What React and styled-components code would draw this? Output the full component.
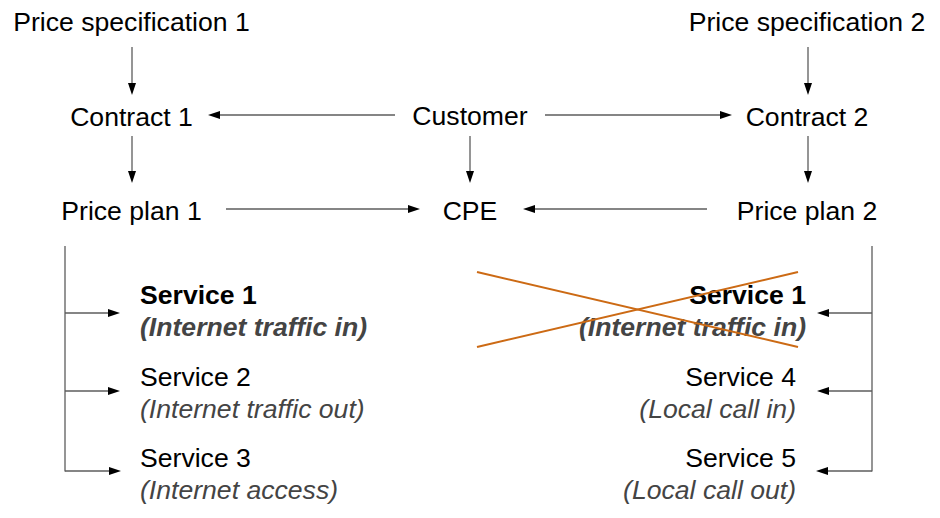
import React from 'react';
import styled, { createGlobalStyle } from 'styled-components';

const GlobalStyle = createGlobalStyle`
    html, body {
        margin: 0;
        padding: 0;
        background: #ffffff;
    }
    body {
        font-family: "Liberation Sans", Arial, sans-serif;
    }
`;

const Canvas = styled.div`
    position: relative;
    box-sizing: border-box;
    width: 940px;
    height: 518px;
    padding-top: 7px;
    overflow: hidden;
    background: #ffffff;
    font-family: "Liberation Sans", Arial, sans-serif;
    font-size: 26.6px;
`;

const Wires = styled.svg`
    position: absolute;
    left: 0;
    top: 0;
    width: 940px;
    height: 518px;
    pointer-events: none;
`;

// three columns of nodes: left contract, customer, right contract
const NodeGrid = styled.div`
    display: grid;
    grid-template-columns: 263px 414px 260px;
    grid-template-rows: 95px 94px 30px;
    justify-items: center;
    align-items: start;
`;

const Node = styled.div`
    grid-column: ${(p) => p.col};
    grid-row: ${(p) => p.row};
    margin-top: ${(p) => p.nudge || 0}px;
    line-height: 30px;
    color: #000000;
    white-space: nowrap;
`;

const ServiceRow = styled.div`
    display: flex;
    justify-content: space-between;
    margin-top: 53px;
    padding: 0 134px 0 140px;
`;

const ServiceList = styled.div`
    display: flex;
    flex-direction: column;
    align-items: ${(p) => (p.side === 'right' ? 'flex-end' : 'flex-start')};
    gap: 17.5px;
`;

const Service = styled.div`
    display: flex;
    flex-direction: column;
    align-items: inherit;
    text-align: ${(p) => (p.side === 'right' ? 'right' : 'left')};
    margin-right: ${(p) => p.shift || 0}px;
    line-height: 32px;
    white-space: nowrap;
`;

const Name = styled.span`
    color: #000000;
    font-weight: ${(p) => (p.strong ? 700 : 400)};
`;

const Note = styled.span`
    color: #444444;
    font-style: italic;
    font-weight: ${(p) => (p.strong ? 700 : 400)};
`;

const arrows = [
    [132, 47, 132, 95],
    [132, 136, 132, 183],
    [395, 115, 208, 115],
    [470, 136, 470, 183],
    [226, 209, 420, 209],
    [545, 115, 732, 115],
    [808, 47, 808, 95],
    [808, 136, 808, 183],
    [707, 209, 523, 209],
    [65, 313, 120, 313],
    [65, 391, 120, 391],
    [65, 471, 121, 471],
    [872, 313, 817, 313],
    [872, 391, 817, 391],
    [872, 471, 816, 471],
];

const Arrow = ({ from, to }) => {
    const [x1, y1] = from;
    const [x2, y2] = to;
    const len = Math.hypot(x2 - x1, y2 - y1);
    const ux = (x2 - x1) / len;
    const uy = (y2 - y1) / len;
    const head = 12;
    const half = 4;
    const bx = x2 - ux * head;
    const by = y2 - uy * head;
    const pts = `${x2},${y2} ${bx - uy * half},${by + ux * half} ${bx + uy * half},${by - ux * half}`;
    return (
        <g>
            <line x1={x1} y1={y1} x2={bx} y2={by} stroke="#5c5c5c" strokeWidth="1.3" />
            <polygon points={pts} fill="#000000" />
        </g>
    );
};

const nodes = [
    { text: 'Price specification 1', col: 1, row: 1 },
    { text: 'Price specification 2', col: 3, row: 1 },
    { text: 'Contract 1', col: 1, row: 2 },
    { text: 'Customer', col: 2, row: 2, nudge: -1 },
    { text: 'Contract 2', col: 3, row: 2 },
    { text: 'Price plan 1', col: 1, row: 3 },
    { text: 'CPE', col: 2, row: 3 },
    { text: 'Price plan 2', col: 3, row: 3 },
];

const leftServices = [
    { name: 'Service 1', note: '(Internet traffic in)', strong: true },
    { name: 'Service 2', note: '(Internet traffic out)' },
    { name: 'Service 3', note: '(Internet access)' },
];

const rightServices = [
    { name: 'Service 1', note: '(Internet traffic in)', strong: true, shift: 0 },
    { name: 'Service 4', note: '(Local call in)', shift: 10 },
    { name: 'Service 5', note: '(Local call out)', shift: 10 },
];

class App extends React.Component {
    render() {
        return (
            <Canvas>
                <GlobalStyle />

                <NodeGrid>
                    {nodes.map((n) => (
                        <Node key={n.text} col={n.col} row={n.row} nudge={n.nudge}>
                            {n.text}
                        </Node>
                    ))}
                </NodeGrid>

                <ServiceRow>
                    <ServiceList side="left">
                        {leftServices.map((s) => (
                            <Service key={s.name} side="left">
                                <Name strong={s.strong}>{s.name}</Name>
                                <Note strong={s.strong}>{s.note}</Note>
                            </Service>
                        ))}
                    </ServiceList>
                    <ServiceList side="right">
                        {rightServices.map((s) => (
                            <Service key={s.name} side="right" shift={s.shift}>
                                <Name strong={s.strong}>{s.name}</Name>
                                <Note strong={s.strong}>{s.note}</Note>
                            </Service>
                        ))}
                    </ServiceList>
                </ServiceRow>

                <Wires viewBox="0 0 940 518">
                    <line x1="65" y1="246" x2="65" y2="471.5" stroke="#5c5c5c" strokeWidth="1.3" />
                    <line x1="872" y1="246" x2="872" y2="471.5" stroke="#5c5c5c" strokeWidth="1.3" />
                    {arrows.map(([x1, y1, x2, y2], i) => (
                        <Arrow key={i} from={[x1, y1]} to={[x2, y2]} />
                    ))}
                    {/* the crossed-out service */}
                    <line x1="477" y1="272" x2="798" y2="347" stroke="#cc6a14" strokeWidth="2" />
                    <line x1="477" y1="347" x2="798" y2="272" stroke="#cc6a14" strokeWidth="2" />
                </Wires>
            </Canvas>
        );
    }
}

export default App;
